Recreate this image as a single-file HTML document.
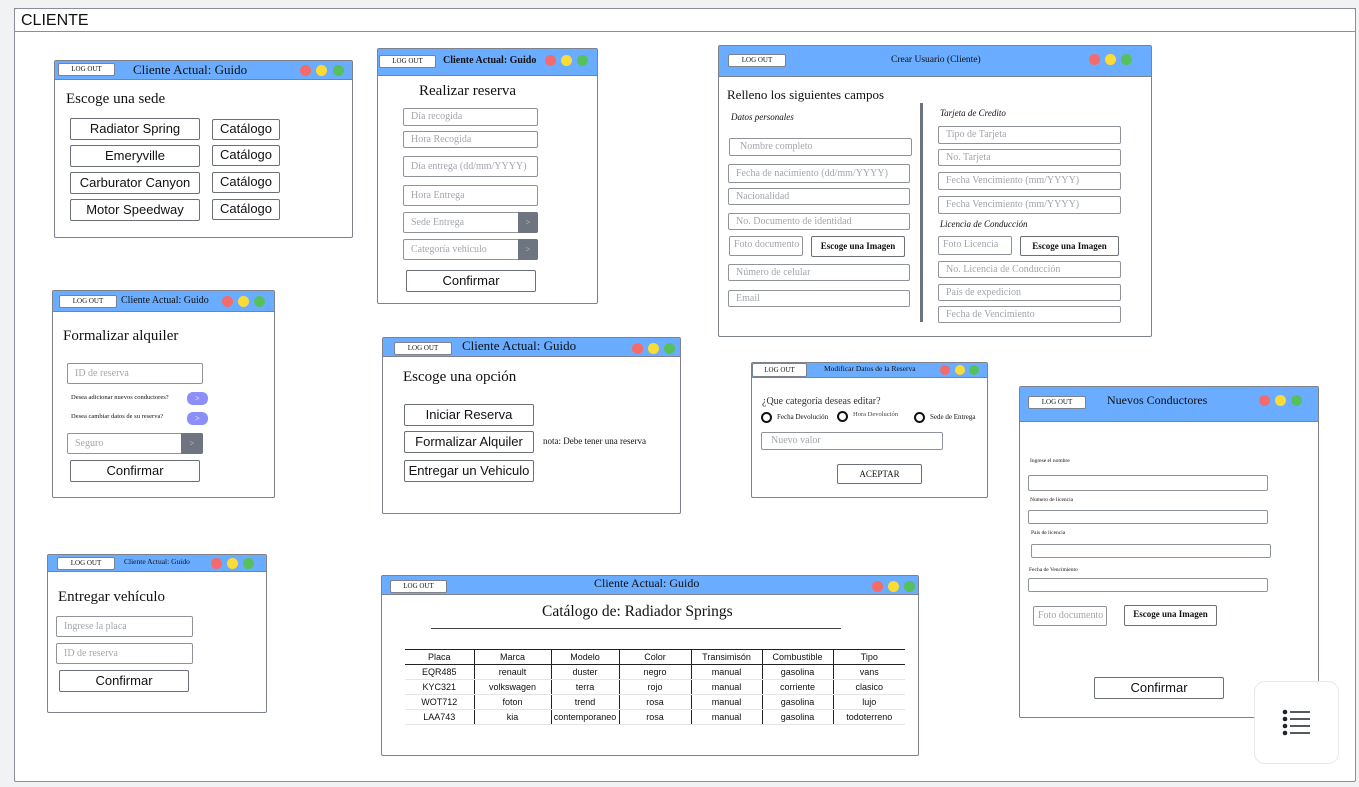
<!DOCTYPE html>
<html><head><meta charset="utf-8"><style>
*{box-sizing:border-box;margin:0;padding:0}
body{width:1359px;height:787px;background:#f1f2f4;position:relative;overflow:hidden;font-family:"Liberation Serif",serif;color:#111}
div,span{position:absolute}
.frame{left:14px;top:8px;width:1342px;height:774px;background:#fff;border:1px solid #8a8e96;border-radius:2px}
.ftop{left:14px;top:8px;width:1342px;height:24px;border:1px solid #8a8e96;border-bottom:1px solid #8a8e96;font:16px "Liberation Sans",sans-serif;padding:3px 0 0 6px}
.w{background:#fff;border:1px solid #7d828c;border-radius:2px}
.h{left:0;top:0;right:0;background:#6aacff;border-bottom:1px solid #7d828c}
.lo{background:#fff;border:1px solid #7d828c;border-radius:2px;font-size:7px;text-align:center;line-height:11px}
.d{width:11px;height:11px;border-radius:50%}
.r{background:#f56b6b}.y{background:#fbdc36}.g{background:#56c15a}
.in{background:#fff;border:1px solid #8f949c;border-radius:2px;color:#a2a6ad;font-size:10px;padding-left:7px;white-space:nowrap;overflow:hidden}
.bt{background:#fff;border:1px solid #6b7079;border-radius:2px;font-family:"Liberation Sans",sans-serif;font-size:13px;text-align:center;color:#111}
.bi{font-family:"Liberation Serif",serif;font-weight:bold;font-size:9px}
.ac{font-family:"Liberation Serif",serif;font-size:9px}
.dk{background:#6f7580;color:#ccc;font-size:8px;text-align:center;border-radius:0 2px 2px 0}
.t{white-space:nowrap}
table{border-collapse:collapse;font:9px "Liberation Sans",sans-serif;position:absolute}
td{text-align:center;height:15px;border-left:1px solid #222;border-bottom:1px solid #e5e5e5;padding:0}
td:first-child{border-left:none}
tr:first-child td{border-top:1px solid #222;border-bottom:1.5px solid #222;height:15px}
</style></head><body>
<div class="frame"></div>
<div class="ftop">CLIENTE</div>

<!-- W1 -->
<div class="w" style="left:54px;top:60px;width:299px;height:178px">
 <div class="h" style="height:19px"></div>
 <div class="lo" style="left:3px;top:2px;width:57px;height:13px">LOG OUT</div>
 <div class="t" style="left:78px;top:1px;font-size:13px">Cliente Actual: Guido</div>
 <div class="d r" style="left:245px;top:4px"></div><div class="d y" style="left:261px;top:4px"></div><div class="d g" style="left:278px;top:4px"></div>
 <div class="t" style="left:11px;top:30px;font-size:15px">Escoge una sede</div>
 <div class="bt" style="left:15px;top:57px;width:130px;height:22px;line-height:20px">Radiator Spring</div>
 <div class="bt" style="left:15px;top:84px;width:130px;height:22px;line-height:20px">Emeryville</div>
 <div class="bt" style="left:15px;top:111px;width:130px;height:22px;line-height:20px">Carburator Canyon</div>
 <div class="bt" style="left:15px;top:138px;width:130px;height:22px;line-height:20px">Motor Speedway</div>
 <div class="bt" style="left:157px;top:58px;width:68px;height:21px;line-height:18px">Catálogo</div>
 <div class="bt" style="left:157px;top:84px;width:68px;height:21px;line-height:18px">Catálogo</div>
 <div class="bt" style="left:157px;top:111px;width:68px;height:21px;line-height:18px">Catálogo</div>
 <div class="bt" style="left:157px;top:138px;width:68px;height:21px;line-height:18px">Catálogo</div>
</div>

<!-- W2 -->
<div class="w" style="left:377px;top:48px;width:221px;height:256px">
 <div class="h" style="height:27px"></div>
 <div class="lo" style="left:1px;top:6px;width:57px;height:13px">LOG OUT</div>
 <div class="t" style="left:65px;top:6px;font-size:10px;font-weight:bold">Cliente Actual: Guido</div>
 <div class="d r" style="left:167px;top:6px"></div><div class="d y" style="left:183px;top:6px"></div><div class="d g" style="left:199px;top:6px"></div>
 <div class="t" style="left:41px;top:34px;font-size:15px">Realizar reserva</div>
 <div class="in" style="left:25px;top:59px;width:135px;height:18px;line-height:16px">Día recogida</div>
 <div class="in" style="left:25px;top:82px;width:135px;height:17px;line-height:15px">Hora Recogida</div>
 <div class="in" style="left:25px;top:107px;width:135px;height:21px;line-height:19px">Día entrega (dd/mm/YYYY)</div>
 <div class="in" style="left:25px;top:136px;width:135px;height:21px;line-height:19px">Hora Entrega</div>
 <div class="in" style="left:25px;top:163px;width:135px;height:21px;line-height:19px">Sede Entrega</div>
 <div class="dk" style="left:140px;top:163px;width:20px;height:21px;line-height:21px">&gt;</div>
 <div class="in" style="left:25px;top:190px;width:135px;height:21px;line-height:19px">Categoría vehiculo</div>
 <div class="dk" style="left:140px;top:190px;width:20px;height:21px;line-height:21px">&gt;</div>
 <div class="bt" style="left:28px;top:221px;width:130px;height:22px;line-height:20px">Confirmar</div>
</div>

<!-- W3 -->
<div class="w" style="left:718px;top:45px;width:434px;height:292px">
 <div class="h" style="height:31px"></div>
 <div class="lo" style="left:9px;top:8px;width:58px;height:13px">LOG OUT</div>
 <div class="t" style="left:172px;top:9px;font-size:9.5px">Crear Usuario (Cliente)</div>
 <div class="d r" style="left:370px;top:8px"></div><div class="d y" style="left:386px;top:8px"></div><div class="d g" style="left:402px;top:8px"></div>
 <div class="t" style="left:8px;top:41px;font-size:13px">Relleno los siguientes campos</div>
 <div style="left:201px;top:57px;width:3px;height:219px;background:#6b7280"></div>
 <div class="t" style="left:12px;top:66px;font-size:9px;font-style:italic">Datos personales</div>
 <div class="in" style="left:10px;top:92px;width:183px;height:18px;line-height:16px;padding-left:10px">Nombre completo</div>
 <div class="in" style="left:9px;top:118px;width:182px;height:19px;line-height:17px">Fecha de nacimiento (dd/mm/YYYY)</div>
 <div class="in" style="left:9px;top:142px;width:182px;height:17px;line-height:15px">Nacionalidad</div>
 <div class="in" style="left:9px;top:167px;width:182px;height:17px;line-height:15px">No. Documento de identidad</div>
 <div class="in" style="left:10px;top:190px;width:74px;height:20px;line-height:16px;padding-left:4px">Foto documento</div>
 <div class="bt bi" style="left:92px;top:190px;width:94px;height:21px;line-height:19px">Escoge una Imagen</div>
 <div class="in" style="left:9px;top:218px;width:182px;height:17px;line-height:15px">Número de celular</div>
 <div class="in" style="left:9px;top:244px;width:182px;height:17px;line-height:15px">Email</div>
 <div class="t" style="top:62px;font-size:9px;font-style:italic;left:221px">Tarjeta de Credito</div>
 <div class="in" style="left:219px;top:80px;width:183px;height:18px;line-height:16px">Tipo de Tarjeta</div>
 <div class="in" style="left:219px;top:103px;width:183px;height:17px;line-height:15px">No. Tarjeta</div>
 <div class="in" style="left:219px;top:126px;width:183px;height:18px;line-height:16px">Fecha Vencimiento (mm/YYYY)</div>
 <div class="in" style="left:219px;top:150px;width:183px;height:18px;line-height:16px">Fecha Vencimiento (mm/YYYY)</div>
 <div class="t" style="left:221px;top:173px;font-size:9px;font-style:italic">Licencia de Conducción</div>
 <div class="in" style="left:219px;top:190px;width:74px;height:19px;line-height:16px;padding-left:4px">Foto Licencia</div>
 <div class="bt bi" style="left:301px;top:190px;width:99px;height:20px;line-height:18px">Escoge una Imagen</div>
 <div class="in" style="left:219px;top:215px;width:183px;height:17px;line-height:15px">No. Licencia de Conducción</div>
 <div class="in" style="left:219px;top:238px;width:183px;height:17px;line-height:15px">País de expedicion</div>
 <div class="in" style="left:219px;top:260px;width:183px;height:17px;line-height:15px">Fecha de Vencimiento</div>
</div>

<!-- W4 -->
<div class="w" style="left:52px;top:290px;width:223px;height:208px">
 <div class="h" style="height:21px"></div>
 <div class="lo" style="left:6px;top:4px;width:58px;height:13px">LOG OUT</div>
 <div class="t" style="left:68px;top:4px;font-size:10px">Cliente Actual: Guido</div>
 <div class="d r" style="left:169px;top:5px"></div><div class="d y" style="left:185px;top:5px"></div><div class="d g" style="left:201px;top:5px"></div>
 <div class="t" style="left:10px;top:37px;font-size:15px">Formalizar alquiler</div>
 <div class="in" style="left:14px;top:72px;width:136px;height:21px;line-height:19px">ID de reserva</div>
 <div class="t" style="left:18px;top:103px;font-size:6.5px">Desea adicionar nuevos conductores?</div>
 <div style="left:134px;top:101px;width:21px;height:13px;border-radius:6px;background:#8b8ff7;color:#fff;font-size:8px;text-align:center;line-height:13px">&gt;</div>
 <div class="t" style="left:18px;top:122px;font-size:6.5px">Desea cambiar datos de su reserva?</div>
 <div style="left:134px;top:121px;width:21px;height:13px;border-radius:6px;background:#8b8ff7;color:#fff;font-size:8px;text-align:center;line-height:13px">&gt;</div>
 <div class="in" style="left:14px;top:142px;width:136px;height:21px;line-height:19px">Seguro</div>
 <div class="dk" style="left:128px;top:142px;width:22px;height:21px;line-height:21px">&gt;</div>
 <div class="bt" style="left:17px;top:169px;width:130px;height:22px;line-height:20px">Confirmar</div>
</div>

<!-- W5 -->
<div class="w" style="left:382px;top:337px;width:299px;height:177px">
 <div class="h" style="height:19px"></div>
 <div class="lo" style="left:11px;top:4px;width:58px;height:13px">LOG OUT</div>
 <div class="t" style="left:79px;top:0px;font-size:13px">Cliente Actual: Guido</div>
 <div class="d r" style="left:249px;top:5px"></div><div class="d y" style="left:265px;top:5px"></div><div class="d g" style="left:281px;top:5px"></div>
 <div class="t" style="left:20px;top:31px;font-size:15px">Escoge una opción</div>
 <div class="bt" style="left:21px;top:66px;width:130px;height:22px;line-height:20px">Iniciar Reserva</div>
 <div class="bt" style="left:21px;top:93px;width:130px;height:22px;line-height:20px">Formalizar Alquiler</div>
 <div class="t" style="left:160px;top:98px;font-size:9px">nota: Debe tener una reserva</div>
 <div class="bt" style="left:21px;top:122px;width:130px;height:22px;line-height:20px">Entregar un Vehiculo</div>
</div>

<!-- W6 -->
<div class="w" style="left:751px;top:362px;width:237px;height:136px">
 <div class="h" style="height:15px"></div>
 <div class="lo" style="left:0px;top:0px;width:55px;height:14px;line-height:12px">LOG OUT</div>
 <div class="t" style="left:72px;top:1px;font-size:7.5px">Modificar Datos de la Reserva</div>
 <div class="d r" style="left:188px;top:2px;width:10px;height:10px"></div><div class="d y" style="left:203px;top:2px;width:10px;height:10px"></div><div class="d g" style="left:217px;top:2px;width:10px;height:10px"></div>
 <div class="t" style="left:10px;top:33px;font-size:10px;color:#333">¿Que categoría deseas editar?</div>
 <div style="left:9px;top:49px;width:11px;height:11px;border:2px solid #111;border-radius:50%"></div>
 <div class="t" style="left:25px;top:50px;font-size:7px">Fecha Devolución</div>
 <div style="left:85px;top:48px;width:11px;height:11px;border:2px solid #111;border-radius:50%"></div>
 <div class="t" style="left:101px;top:48px;font-size:6.5px;color:#444">Hora Devolución</div>
 <div style="left:162px;top:49px;width:11px;height:11px;border:2px solid #111;border-radius:50%"></div>
 <div class="t" style="left:178px;top:50px;font-size:7px">Sede de Entrega</div>
 <div class="in" style="left:9px;top:69px;width:182px;height:18px;line-height:16px;padding-left:9px">Nuevo valor</div>
 <div class="bt ac" style="left:85px;top:101px;width:85px;height:20px;line-height:18px">ACEPTAR</div>
</div>

<!-- W7 -->
<div class="w" style="left:1019px;top:386px;width:300px;height:332px">
 <div class="h" style="height:35px"></div>
 <div class="lo" style="left:8px;top:9px;width:58px;height:13px">LOG OUT</div>
 <div class="t" style="left:87px;top:6px;font-size:12px">Nuevos Conductores</div>
 <div class="d r" style="left:239px;top:8px"></div><div class="d y" style="left:255px;top:8px"></div><div class="d g" style="left:271px;top:8px"></div>
 <div class="t" style="left:10px;top:71px;font-size:5.5px">Ingrese el nombre</div>
 <div class="in" style="left:8px;top:88px;width:240px;height:16px"></div>
 <div class="t" style="left:10px;top:110px;font-size:5.5px">Numero de licencia</div>
 <div class="in" style="left:8px;top:123px;width:240px;height:14px"></div>
 <div class="t" style="left:11px;top:143px;font-size:5.5px">Pais de licencia</div>
 <div class="in" style="left:11px;top:157px;width:240px;height:14px"></div>
 <div class="t" style="left:9px;top:180px;font-size:5.5px">Fecha de Vencimiento</div>
 <div class="in" style="left:8px;top:191px;width:240px;height:14px"></div>
 <div class="in" style="left:13px;top:219px;width:74px;height:20px;line-height:18px;padding-left:4px">Foto documento</div>
 <div class="bt bi" style="left:104px;top:218px;width:93px;height:21px;line-height:17px">Escoge una Imagen</div>
 <div class="bt" style="left:74px;top:290px;width:130px;height:22px;line-height:20px">Confirmar</div>
</div>

<!-- W8 -->
<div class="w" style="left:47px;top:554px;width:220px;height:159px">
 <div class="h" style="height:17px"></div>
 <div class="lo" style="left:9px;top:2px;width:58px;height:13px">LOG OUT</div>
 <div class="t" style="left:76px;top:2px;font-size:7.5px">Cliente Actual: Guido</div>
 <div class="d r" style="left:163px;top:3px"></div><div class="d y" style="left:179px;top:3px"></div><div class="d g" style="left:195px;top:3px"></div>
 <div class="t" style="left:10px;top:34px;font-size:15px">Entregar vehículo</div>
 <div class="in" style="left:8px;top:61px;width:137px;height:21px;line-height:19px">Ingrese la placa</div>
 <div class="in" style="left:8px;top:88px;width:137px;height:21px;line-height:19px">ID de reserva</div>
 <div class="bt" style="left:11px;top:115px;width:130px;height:22px;line-height:20px">Confirmar</div>
</div>

<!-- W9 -->
<div class="w" style="left:381px;top:575px;width:538px;height:181px">
 <div class="h" style="height:19px"></div>
 <div class="lo" style="left:8px;top:4px;width:57px;height:13px">LOG OUT</div>
 <div class="t" style="left:212px;top:0px;font-size:12px">Cliente Actual: Guido</div>
 <div class="d r" style="left:490px;top:5px"></div><div class="d y" style="left:506px;top:5px"></div><div class="d g" style="left:522px;top:5px"></div>
 <div class="t" style="left:160px;top:27px;font-size:15.5px">Catálogo de: Radiador Springs</div>
 <div style="left:49px;top:52px;width:410px;height:1px;background:#444"></div>
 <table style="left:23px;top:73px;width:500px">
  <colgroup><col style="width:69px"><col style="width:77px"><col style="width:68px"><col style="width:72px"><col style="width:71px"><col style="width:71px"><col style="width:72px"></colgroup>
  <tr><td>Placa</td><td>Marca</td><td>Modelo</td><td>Color</td><td>Transimisón</td><td>Combustible</td><td>Tipo</td></tr>
  <tr><td>EQR485</td><td>renault</td><td>duster</td><td>negro</td><td>manual</td><td>gasolina</td><td>vans</td></tr>
  <tr><td>KYC321</td><td>volkswagen</td><td>terra</td><td>rojo</td><td>manual</td><td>corriente</td><td>clasico</td></tr>
  <tr><td>WOT712</td><td>foton</td><td>trend</td><td>rosa</td><td>manual</td><td>gasolina</td><td>lujo</td></tr>
  <tr><td>LAA743</td><td>kia</td><td>contemporaneo</td><td>rosa</td><td>manual</td><td>gasolina</td><td>todoterreno</td></tr>
 </table>
</div>

<!-- floating menu -->
<div style="left:1254px;top:681px;width:85px;height:83px;background:#fff;border:1px solid #e6e8eb;border-radius:11px">
 <svg style="position:absolute;left:27px;top:27px" width="30" height="28" viewBox="0 0 30 28">
  <g fill="#1f2328"><circle cx="3" cy="3" r="2.3"/><circle cx="3" cy="10" r="2.3"/><circle cx="3" cy="17" r="2.3"/><circle cx="3" cy="24" r="2.3"/></g>
  <g stroke="#1f2328" stroke-width="1.6"><line x1="8" y1="3" x2="28" y2="3"/><line x1="8" y1="10" x2="28" y2="10"/><line x1="8" y1="17" x2="28" y2="17"/><line x1="8" y1="24" x2="28" y2="24"/></g>
 </svg>
</div>
</body></html>
